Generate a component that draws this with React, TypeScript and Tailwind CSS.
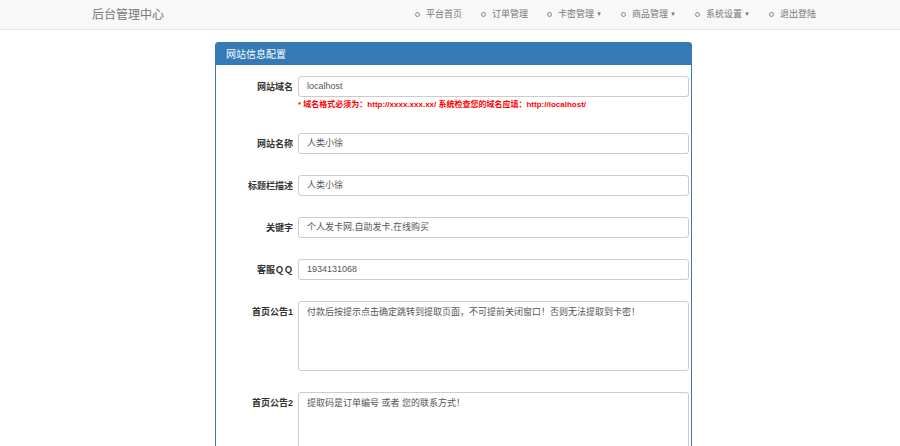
import React from "react";

const navs = [
  ["平台首页", false],
  ["订单管理", false],
  ["卡密管理", true],
  ["商品管理", true],
  ["系统设置", true],
  ["退出登陆", false],
] as const;

function Row({ label, value, children }: { label: string; value: string; children?: React.ReactNode }) {
  return (
    <div className="flex items-start">
      <div className="w-[82px] shrink-0 text-right pr-[5px] pt-[5px] font-bold text-[9px] text-[#333]">{label}</div>
      <div className="flex-1 mr-[2px]">
        <div className="h-[21px] border border-[#ccc] rounded-[3px] bg-white px-[8px] flex items-center text-[9px] text-[#555]">{value}</div>
        {children}
      </div>
    </div>
  );
}

export default function App() {
  return (
    <div className="w-[900px] h-[446px] overflow-hidden bg-white" style={{ fontFamily: '"Liberation Sans", Arial, "Noto Sans CJK SC", sans-serif' }}>
      <div className="h-[30px] bg-[#f8f8f8] border-b border-[#e7e7e7] flex items-center">
        <div className="ml-[92px] text-[12px] text-[#777]">后台管理中心</div>
        <div className="ml-auto mr-[84px] flex items-center gap-[19px] text-[9px] text-[#777]">
          {navs.map(([t, c]) => (
            <div key={t} className="flex items-center">
              <span className="inline-block w-[5px] h-[5px] rounded-full border border-[#888] mr-[6px]" />
              {t}
              {c && <span className="ml-[2px] text-[6px]">▼</span>}
            </div>
          ))}
        </div>
      </div>
      <div className="ml-[215px] mt-[12px] w-[477px] h-[420px] border border-[#337ab7] rounded-t-[3px]">
        <div className="h-[22px] bg-[#337ab7] text-white text-[10px] flex items-center pl-[10px]">网站信息配置</div>
        <div className="pt-[11px] flex flex-col gap-[21px]">
          <Row label="网站域名" value="localhost">
            <div className="mt-[2px] mb-[2px] text-[8px] font-bold text-[#f00] h-[11px]">* 域名格式必须为：http://xxxx.xxx.xx/ 系统检查您的域名应填：http://localhost/</div>
          </Row>
          <Row label="网站名称" value="人类小徐" />
          <Row label="标题栏描述" value="人类小徐" />
          <Row label="关键字" value="个人发卡网,自助发卡,在线购买" />
          <Row label="客服ＱＱ" value="1934131068" />
          <div className="flex items-start">
            <div className="w-[82px] shrink-0 text-right pr-[5px] pt-[5px] font-bold text-[9px] text-[#333]">首页公告1</div>
            <div className="flex-1 mr-[2px] h-[70px] border border-[#ccc] rounded-[3px] px-[8px] pt-[4px] text-[9px] text-[#555]">付款后按提示点击确定跳转到提取页面，不可提前关闭窗口！否则无法提取到卡密！</div>
          </div>
          <div className="flex items-start">
            <div className="w-[82px] shrink-0 text-right pr-[5px] pt-[5px] font-bold text-[9px] text-[#333]">首页公告2</div>
            <div className="flex-1 mr-[2px] h-[70px] border border-[#ccc] rounded-[3px] px-[8px] pt-[4px] text-[9px] text-[#555]">提取码是订单编号 或者 您的联系方式！</div>
          </div>
        </div>
      </div>
    </div>
  );
}
